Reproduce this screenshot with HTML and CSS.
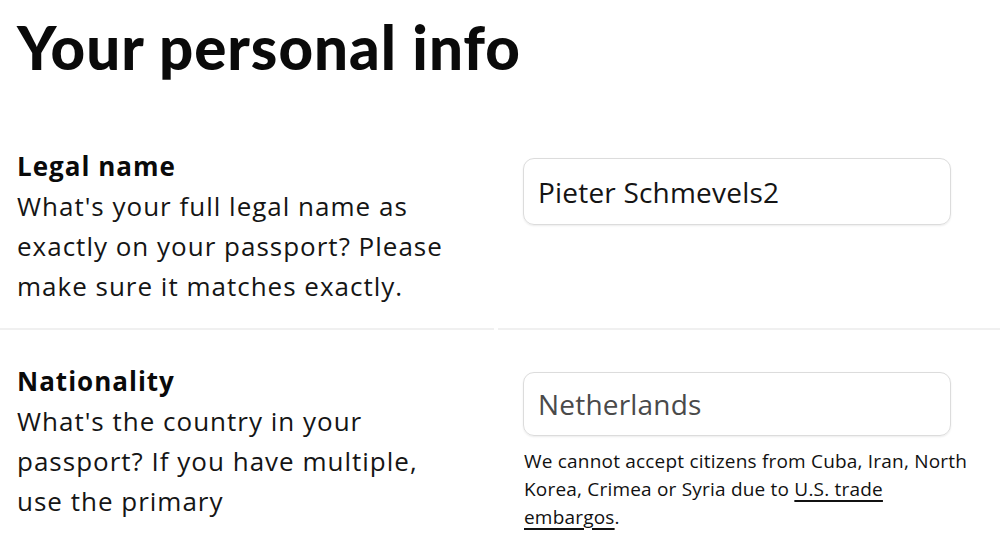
FILE: index.html
```html
<!DOCTYPE html>
<html lang="en">
<head>
<meta charset="utf-8">
<title>Your personal info</title>
<link rel="stylesheet" href="styles.css">
</head>
<body>
<main class="page">
  <h1 class="title">Your personal info</h1>
  <section class="row">
    <div class="cell cell-info">
      <h2 class="label">Legal name</h2>
      <p class="desc">What's your full legal name as exactly on your passport? Please make sure it matches exactly.</p>
    </div>
    <div class="cell cell-field">
      <div class="input input-tall">Pieter Schmevels2</div>
    </div>
  </section>
  <section class="row">
    <div class="cell cell-info">
      <h2 class="label">Nationality</h2>
      <p class="desc">What's the country in your passport? If you have multiple, use the primary</p>
    </div>
    <div class="cell cell-field">
      <div class="input input-muted">Netherlands</div>
      <p class="help">We cannot accept citizens from Cuba, Iran, North Korea, Crimea or Syria due to <a class="link" href="#">U.S. trade embargos</a>.</p>
    </div>
  </section>
</main>
</body>
</html>
```

FILE: styles.css
```css
html, body {
  margin: 0;
  padding: 0;
  background: #fff;
}

body {
  font-family: "Open Sans", "Lato", sans-serif;
  color: #111;
}

.page {
  padding-top: 11px;
}

.title {
  margin: 0 0 32px;
  padding-left: 17px;
  font-family: "Lato", "Open Sans", sans-serif;
  font-size: 60px;
  line-height: 72px;
  font-weight: 900;
  letter-spacing: 1px;
  color: #0a0a0a;
}

.row {
  display: grid;
  grid-template-columns: 494px 1fr;
  column-gap: 4px;
}

.cell {
  border-bottom: 2px solid #f0f0f0;
  padding-top: 31px;
  padding-bottom: 22px;
}

.cell-info {
  padding-left: 17px;
  padding-right: 20px;
}

.cell-field {
  padding-left: 25px;
}

.label {
  margin: 0;
  font-size: 26px;
  line-height: 40px;
  font-weight: 700;
  letter-spacing: 1px;
  color: #0a0a0a;
}

.desc {
  margin: 0;
  font-size: 26px;
  line-height: 40px;
  font-weight: 400;
  letter-spacing: 1px;
  color: #151515;
  max-width: 445px;
}

.input {
  box-sizing: border-box;
  width: 428px;
  height: 64px;
  margin-top: 11px;
  border: 1px solid #dcdcdc;
  border-radius: 11px;
  box-shadow: 0 1px 2px rgba(0, 0, 0, 0.08);
  padding-left: 14px;
  display: flex;
  align-items: center;
  font-size: 28px;
  letter-spacing: 0.2px;
  color: #141414;
}

.input-tall {
  height: 67px;
  margin-top: 12px;
}

.input-muted {
  color: #4a4a4a;
}

.help {
  margin: 11px 0 0;
  padding-left: 1px;
  font-size: 19px;
  line-height: 28px;
  letter-spacing: 0.2px;
  color: #111;
  max-width: 446px;
}

.link {
  color: #111;
  text-decoration: underline;
  text-decoration-thickness: 1.5px;
  text-underline-offset: 4px;
}
```
